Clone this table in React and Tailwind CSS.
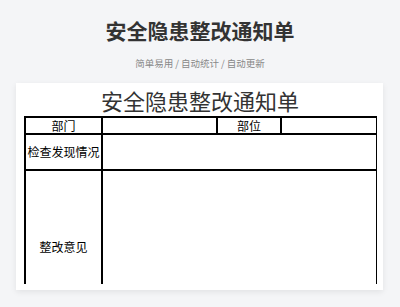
import React from 'react';

const cell = 'border-2 border-black text-[12px] leading-[14px] text-black text-center align-middle p-0';

const App = () => {
    return (
        <div className="h-[307px] w-[400px] overflow-hidden bg-[#f4f5f7] font-['Noto_Sans_CJK_SC',sans-serif]">
            {/* Page header */}
            <div className="pt-[16px] text-center">
                <h1 className="text-[21px] leading-[28px] font-bold text-[#333]">安全隐患整改通知单</h1>
                <p className="mt-[11px] text-[9.5px] leading-[16px] text-[#888] flex justify-center items-center">
                    <span>简单易用</span>
                    <span className="mx-[2px]">/</span>
                    <span>自动统计</span>
                    <span className="mx-[2px]">/</span>
                    <span>自动更新</span>
                </p>
            </div>

            {/* Form card */}
            <div className="ml-[16px] w-[367px] mt-[12px] h-[207px] bg-white shadow-[0_2px_6px_rgba(0,0,0,0.08)] pl-[7px] pr-[6px] pt-[2px]">
                <div className="h-[199px] overflow-hidden">
                    <h2 className="text-center text-[22px] leading-[31px] font-normal text-[#333]">安全隐患整改通知单</h2>
                    <table className="ml-[1px] w-[352px] border-collapse table-fixed">
                        <colgroup>
                            <col className="w-[77px]" />
                            <col className="w-[115px]" />
                            <col className="w-[64px]" />
                            <col className="w-[96px]" />
                        </colgroup>
                        <tbody>
                            <tr className="h-[17px]">
                                <td className={cell}>部门</td>
                                <td className={cell}></td>
                                <td className={cell}>部位</td>
                                <td className={cell}></td>
                            </tr>
                            <tr className="h-[36px]">
                                <td className={cell}>检查发现情况</td>
                                <td className={cell} colSpan={3}></td>
                            </tr>
                            <tr className="h-[154px]">
                                <td className={cell}>整改意见</td>
                                <td className={cell} colSpan={3}></td>
                            </tr>
                        </tbody>
                    </table>
                </div>
            </div>
        </div>
    );
};

export default App;
